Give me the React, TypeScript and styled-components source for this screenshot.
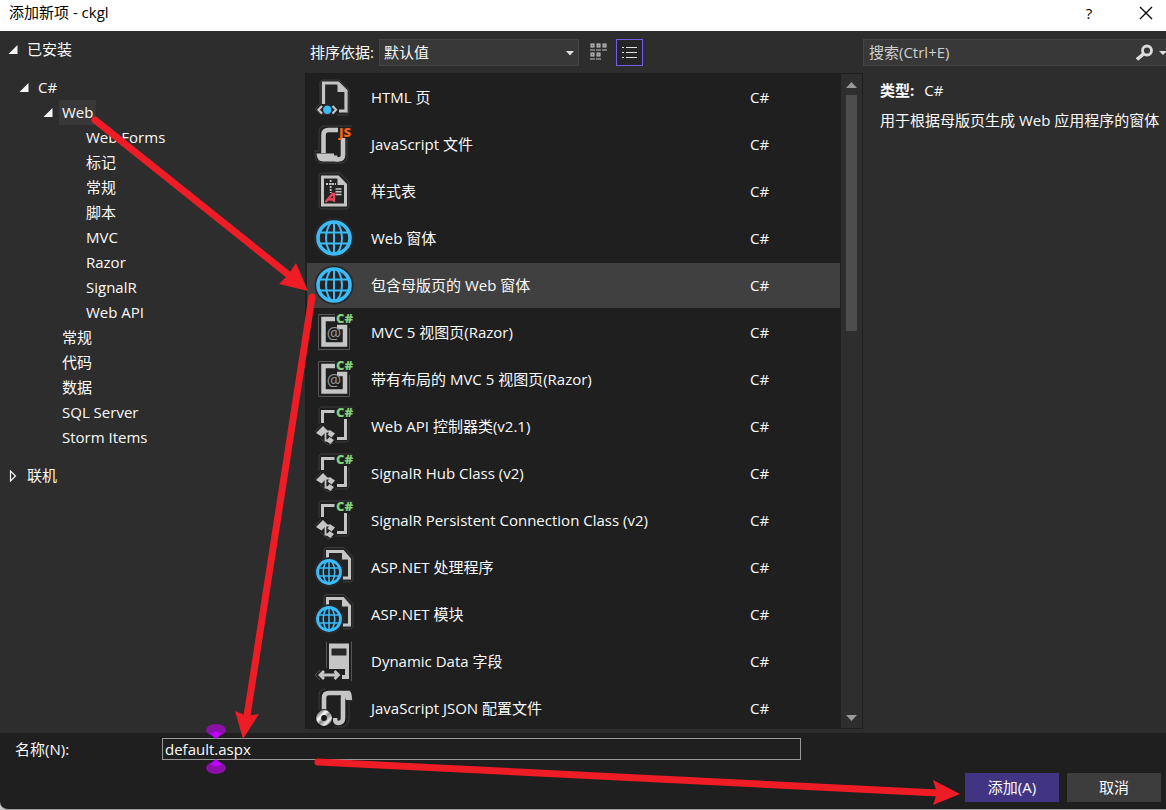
import React from "react";
import styled, { createGlobalStyle } from "styled-components";

const GlobalStyle = createGlobalStyle`
  * { box-sizing: border-box; }
  body { margin: 0; background: #c8c8c8; }
  body, button, input, select {
    font-family: "Open Sans", "Noto Sans CJK SC", sans-serif;
    font-size: 15px;
    line-height: 25px;
  }
`;

const Dialog = styled.div`
  position: relative;
  display: flex;
  flex-direction: column;
  height: 100vh;
  overflow: hidden;
  color: #fafafa;
  background: #1f1f1f;
  border-bottom: 1px solid #a0a0a0;
  border-bottom-left-radius: 8px;
`;

const TitleBar = styled.header`
  display: flex;
  align-items: center;
  flex: none;
  height: 31px;
  padding: 0 12px 6px 9px;
  background: #fff;
  color: #000;
`;

const Title = styled.h1`
  flex: 1;
  margin: 0;
  font-size: 15px;
  font-weight: 400;
`;

const TitleButton = styled.button`
  display: grid;
  place-items: center;
  width: 16px;
  height: 24px;
  margin-left: 41px;
  padding: 0;
  border: 0;
  background: none;
  color: #000;
`;

const Body = styled.main`
  display: grid;
  grid-template-columns: 305px minmax(0, 1fr) 303px;
  flex: 1;
  min-height: 0;
  background: #2d2d2d;
`;

const Sidebar = styled.nav`
  padding-top: 6px;
`;

const Group = styled.div<{ $gap?: number }>`
  margin-bottom: ${(p) => p.$gap ?? 0}px;
`;

const TreeRow = styled.div<{ $indent: number }>`
  display: flex;
  align-items: center;
  height: 25px;
  padding-left: ${(p) => p.$indent}px;
`;

const Toggle = styled.button`
  display: flex;
  width: 16px;
  padding: 0;
  border: 0;
  background: none;
`;

const TreeLabel = styled.a<{ $selected?: boolean }>`
  padding: 0 3px;
  color: inherit;
  text-decoration: none;
  background: ${(p) => (p.$selected ? "#383838" : "none")};
`;

const Center = styled.section`
  display: flex;
  flex-direction: column;
  min-height: 0;
  padding-bottom: 4px;
`;

const SortBar = styled.div`
  display: flex;
  align-items: center;
  flex: none;
  height: 42px;
  padding-left: 5px;
`;

const SortLabel = styled.label`
  width: 69px;
  white-space: nowrap;
`;

const SelectBox = styled.div`
  position: relative;
  width: 200px;
  margin-right: 10px;
`;

const SortSelect = styled.select`
  display: block;
  appearance: none;
  width: 100%;
  height: 27px;
  padding: 0 24px 0 4px;
  border: 1px solid #434343;
  background: #383838;
  color: #fafafa;
`;

const SelectArrow = styled.svg`
  position: absolute;
  right: 5px;
  top: 12px;
  pointer-events: none;
`;

const ViewButton = styled.button<{ $active?: boolean }>`
  display: grid;
  place-items: center;
  width: ${(p) => (p.$active ? 27 : 19)}px;
  height: 27px;
  margin-right: 8px;
  padding: 0;
  border: ${(p) => (p.$active ? "1px solid #7160e8" : "0")};
  background: ${(p) => (p.$active ? "#252525" : "none")};
`;

const ListFrame = styled.div`
  display: flex;
  flex: 1;
  min-height: 0;
  background: #1f1f1f;
`;

const List = styled.ul`
  display: flex;
  flex-direction: column;
  gap: 2px;
  flex: 1;
  margin: 0;
  padding: 2px 1px 0 2px;
  overflow: hidden;
  list-style: none;
`;

const ListRow = styled.li<{ $selected?: boolean }>`
  display: flex;
  align-items: center;
  flex: none;
  height: 45px;
  padding-left: 3px;
  background: ${(p) => (p.$selected ? "#404040" : "none")};
`;

const ItemName = styled.span`
  flex: 1;
  padding-left: 17px;
  white-space: nowrap;
`;

const ItemType = styled.span`
  width: 90px;
`;

const ScrollTrack = styled.div`
  display: flex;
  flex-direction: column;
  align-items: center;
  width: 21px;
  margin: 1px 1px 1px 0;
  padding: 8px 0 7px;
  background: #2e2e2e;
`;

const ScrollThumb = styled.div`
  width: 11px;
  height: 37%;
  margin: 7px 0 auto;
  background: #4d4d4d;
`;

const Details = styled.aside`
  min-width: 0;
`;

const SearchBox = styled.div`
  display: flex;
  align-items: center;
  height: 27px;
  margin-top: 8px;
  border: 1px solid #434343;
  border-right: 0;
  background: #383838;
`;

const SearchInput = styled.input`
  flex: 1;
  min-width: 0;
  padding: 0 5px;
  border: 0;
  outline: 0;
  background: none;
  color: #fafafa;
  &::placeholder { color: #cfcfcf; opacity: 1; }
`;

const DetailText = styled.p`
  margin: 0;
  padding: 12px 0 0 17px;
  white-space: nowrap;
  & + & { padding-top: 5px; }
  strong { margin-right: 10px; }
`;

const Footer = styled.footer`
  flex: none;
  padding: 5px 5px 7px 15px;
`;

const NameField = styled.div`
  display: flex;
  align-items: center;
  height: 22px;
  margin-bottom: 13px;
`;

const NameLabel = styled.label`
  width: 147px;
`;

const NameInput = styled.input`
  flex: 1;
  height: 22px;
  margin-right: 360px;
  padding: 0 2px;
  border: 1px solid #999;
  outline: 0;
  background: #1f1f1f;
  color: #fafafa;
`;

const Actions = styled.div`
  display: flex;
  justify-content: flex-end;
  gap: 8px;
`;

const ActionButton = styled.button<{ $primary?: boolean }>`
  width: 94px;
  height: 29px;
  padding: 0;
  border: 0;
  background: ${(p) => (p.$primary ? "#413583" : "#3d3d3d")};
  color: #fafafa;
`;

const Annotations = styled.svg`
  position: absolute;
  top: 0;
  left: 0;
  pointer-events: none;
`;

const Ic = styled.svg.attrs({ width: 44, height: 45, viewBox: "0 0 44 45", fill: "none" })`
  flex: none;
  display: block;
`;

const G = "#c5c5c5";
const BLUE = "#3cbbfa";
const HALO = "#454545";
const DARK = "#242424";

function Lang() {
  return <text x="26" y="13" fontSize="13" fontWeight="800" fontFamily="Open Sans" fill="#80d07d">C#</text>;
}

function Globe({ cx, cy, r, w }: { cx: number; cy: number; r: number; w: number }) {
  const k = r * 0.34;
  const h = Math.sqrt(r * r - k * k);
  return (
    <g>
      <circle cx={cx} cy={cy} r={r + w / 2 + 1.5} fill={DARK} stroke="#303030" strokeWidth="0.7" />
      <g stroke={BLUE}>
        <circle cx={cx} cy={cy} r={r} strokeWidth={w} />
        <path strokeWidth={w * 0.55} d={`M${cx - h} ${cy - k}H${cx + h}M${cx - h} ${cy + k}H${cx + h}M${cx} ${cy - r}V${cy + r}`} />
        <ellipse cx={cx} cy={cy} rx={r * 0.5} ry={r} strokeWidth={w * 0.55} />
      </g>
    </g>
  );
}

function HtmlIcon() {
  return (
    <Ic>
      <path d="M10 29V7l2-2h17l10 10v22l-2 3H27M10 29l-5 5 5 5h15" stroke={HALO} fill={DARK} strokeWidth="0.8" />
      <path d="M13.500 29V8H28l8 8v20h-7" stroke={G} strokeWidth="3.200" />
      <path d="M27.500 7l10 10h-10z" fill={G} />
      <path d="M12 31l-3.500 3.700L12 38.400M22.500 31l3.500 3.700-3.500 3.700" stroke={G} strokeWidth="2.200" />
      <circle cx="17.300" cy="34.700" r="4.200" fill={BLUE} />
    </Ic>
  );
}

function JsIcon() {
  return (
    <Ic>
      <path d="M9 29V10q0-5 5-6h28M4 29h5M5 31q0 9 6 10h21q5-1 5-6V17" stroke={HALO} strokeWidth="0.8" />
      <path d="M13.500 31V13q0-5 5-5H28M33 16v17q0 4.500-5 4.500-3 0-3-4" stroke={G} strokeWidth="4.600" />
      <path d="M6.500 31.500H24q0 6 4 8H13q-6 0-6.500-8z" fill={G} />
      <text x="29" y="15" fontSize="13" fontWeight="800" fontFamily="Open Sans" fill="#f26419">JS</text>
    </Ic>
  );
}

function CssIcon() {
  return (
    <Ic>
      <path d="M9 5l2-1h19l9 9v25l-2 2H11l-2-2z" stroke={HALO} fill={DARK} strokeWidth="0.8" />
      <path d="M12.500 8H28l7.500 7.500V36h-23z" stroke={G} strokeWidth="3" />
      <path d="M27.500 7l9 9h-9z" fill={G} />
      <path d="M16 15h10M20.700 11v13" stroke={G} strokeWidth="1.800" strokeDasharray="2 1" />
      <path d="M25.500 20h6M25.500 22.800h6M25.500 25.600h6" stroke={G} strokeWidth="1.500" />
      <path d="M15.500 33l7-8h1.500v8M18.500 30.500h5.500" stroke="#e84558" strokeWidth="2.400" />
    </Ic>
  );
}

function WebIcon() {
  return <Ic><Globe cx={24} cy={22} r={16} w={3.6} /></Ic>;
}

function RazorIcon() {
  return (
    <Ic>
      <path d="M25 4.500H8.500v35h31V18" stroke="#555" strokeWidth="1" />
      <path d="M25 9H13.500v25.500h21.500V17h-8" stroke={G} strokeWidth="4.500" />
      <text x="24" y="29" textAnchor="middle" fontSize="16" fontFamily="Open Sans" fill="#999">@</text>
      <Lang />
    </Ic>
  );
}

function ClassIcon() {
  return (
    <Ic>
      <path d="M9 20V5l2-2h30M39 16v20l-2 2H25M5 28l6-7M10 34l8 7 5-2M42 3v2" stroke={HALO} strokeWidth="0.800" />
      <path d="M12.500 19V7.500h12M35.500 15v19.500H27" stroke={G} strokeWidth="3" />
      <path d="M6 29l7-7 4.500 4.500-6 6z M20.500 26.500l4.500 3-3.500 4-4-3z M19.500 33l4.500 3-3.500 4-4.500-3z" fill={G} />
      <path d="M14 27.500h7M15.500 28v8.500h4" stroke={G} strokeWidth="1.800" />
      <Lang />
    </Ic>
  );
}

function AspIcon() {
  return (
    <Ic>
      <path d="M14 13V4l2-1.500h18l9 9v24l-2 1.500h-8" stroke={HALO} fill={DARK} strokeWidth="0.800" />
      <path d="M17.500 13V6.500H33l6.500 7.500v19H33" stroke={G} strokeWidth="3" />
      <path d="M32 5.500l9 9h-9z" fill={G} />
      <Globe cx={19} cy={27} r={11.5} w={2.8} />
    </Ic>
  );
}

function FieldIcon() {
  return (
    <Ic>
      <path d="M16.500 2.500V29M41.500 2.500V42M10 31l-5 5 5 5" stroke="#555" strokeWidth="1" />
      <path d="M19 4.500h20V40h-7v-4h3v-6H19z" fill={G} />
      <path d="M21.500 9.500h15v7h-15z" fill="#282828" />
      <path d="M11 36h16M14 32l-4 4 4 4M24.500 32l4 4-4 4" stroke={G} strokeWidth="2.800" />
    </Ic>
  );
}

function JsonIcon() {
  return (
    <Ic>
      <path d="M9 24V8q1-5 6-5M43 14h-4v20q-1 7-8 7h-7" stroke={HALO} strokeWidth="0.800" />
      <path d="M14 25V12q0-5 5-5h16q-2 2-2 6v19q0 5-5 5-3 0-3-5" stroke={G} strokeWidth="4.600" />
      <path d="M33 5h6q3 0 3 9h-6z" fill={G} />
      <circle cx="14" cy="32" r="9" fill="#181818" />
      <circle cx="14" cy="32" r="5.400" stroke="url(#ring)" strokeWidth="5" />
      <defs>
        <linearGradient id="ring" x1="0" y1="0" x2="1" y2="1">
          <stop offset="0" stopColor="#777" />
          <stop offset="0.300" stopColor="#fff" />
          <stop offset="0.550" stopColor="#8a8a8a" />
          <stop offset="0.850" stopColor="#eee" />
          <stop offset="1" stopColor="#888" />
        </linearGradient>
      </defs>
    </Ic>
  );
}

const items: { icon: React.FC; name: string }[] = [
  { icon: HtmlIcon, name: "HTML 页" },
  { icon: JsIcon, name: "JavaScript 文件" },
  { icon: CssIcon, name: "样式表" },
  { icon: WebIcon, name: "Web 窗体" },
  { icon: WebIcon, name: "包含母版页的 Web 窗体" },
  { icon: RazorIcon, name: "MVC 5 视图页(Razor)" },
  { icon: RazorIcon, name: "带有布局的 MVC 5 视图页(Razor)" },
  { icon: ClassIcon, name: "Web API 控制器类(v2.1)" },
  { icon: ClassIcon, name: "SignalR Hub Class (v2)" },
  { icon: ClassIcon, name: "SignalR Persistent Connection Class (v2)" },
  { icon: AspIcon, name: "ASP.NET 处理程序" },
  { icon: AspIcon, name: "ASP.NET 模块" },
  { icon: FieldIcon, name: "Dynamic Data 字段" },
  { icon: JsonIcon, name: "JavaScript JSON 配置文件" },
];

const webChildren = ["Web Forms", "标记", "常规", "脚本", "MVC", "Razor", "SignalR", "Web API"];
const langChildren = ["常规", "代码", "数据", "SQL Server", "Storm Items"];

function Node({ label, indent, open, selected }: { label: string; indent: number; open?: boolean; selected?: boolean }) {
  return (
    <TreeRow $indent={indent}>
      {open !== undefined && (
        <Toggle aria-label={label} aria-expanded={open}>
          <svg width="10" height="12" viewBox="0 0 10 12">
            {open ? <path d="M0.500 10H9.500V1z" fill="#f5f5f5" /> : <path d="M2.500 1v10L7.500 6z" fill="none" stroke="#f5f5f5" strokeWidth="1.200" />}
          </svg>
        </Toggle>
      )}
      <TreeLabel href="#" $selected={selected}>{label}</TreeLabel>
    </TreeRow>
  );
}

export default function App() {
  return (
    <Dialog>
      <GlobalStyle />
      <TitleBar>
        <Title>添加新项 - ckgl</Title>
        <TitleButton aria-label="帮助">?</TitleButton>
        <TitleButton aria-label="关闭">
          <svg width="14" height="14" viewBox="0 0 14 14"><path d="M1 1l12 12M13 1L1 13" stroke="#000" strokeWidth="1.300" /></svg>
        </TitleButton>
      </TitleBar>
      <Body>
        <Sidebar>
          <Group $gap={13}><Node label="已安装" indent={8} open /></Group>
          <Group $gap={13}>
            <Node label="C#" indent={19} open />
            <Node label="Web" indent={43} open selected />
            {webChildren.map((c) => <Node key={c} label={c} indent={83} />)}
            {langChildren.map((c) => <Node key={c} label={c} indent={59} />)}
          </Group>
          <Node label="联机" indent={8} open={false} />
        </Sidebar>
        <Center>
          <SortBar>
            <SortLabel htmlFor="sort">排序依据:</SortLabel>
            <SelectBox>
              <SortSelect id="sort"><option>默认值</option></SortSelect>
              <SelectArrow width="8" height="5" viewBox="0 0 8 5"><path d="M0 0h8L4 4.500z" fill="#e0e0e0" /></SelectArrow>
            </SelectBox>
            <ViewButton aria-label="图标">
              <svg width="18" height="19" viewBox="0 0 18 19" fill="none">
                {[[0, 1], [6, 1], [12, 1], [0, 10], [6, 10]].map(([x, y]) => (
                  <g key={`${x}-${y}`}>
                    <rect x={x + 1} y={y} width="3" height="3" fill="#777" stroke="#c5c5c5" strokeWidth="1" />
                    <path d={`M${x} ${y + 6}h5`} stroke="#999" strokeWidth="1.400" />
                  </g>
                ))}
              </svg>
            </ViewButton>
            <ViewButton $active aria-label="列表">
              <svg width="15" height="13" viewBox="0 0 15 13">
                <path d="M0 1.500h2M0 6.500h2M0 11.500h2M4 1.500h11M4 6.500h11M4 11.500h11" stroke="#e0e0e0" strokeWidth="1.200" />
              </svg>
            </ViewButton>
          </SortBar>
          <ListFrame>
            <List>
              {items.map(({ icon: Icon, name }, i) => (
                <ListRow key={name} $selected={i === 4}>
                  <Icon />
                  <ItemName>{name}</ItemName>
                  <ItemType>C#</ItemType>
                </ListRow>
              ))}
            </List>
            <ScrollTrack>
              <svg width="11" height="6" viewBox="0 0 11 6"><path d="M0 6h11L5.500 0z" fill="#999" /></svg>
              <ScrollThumb />
              <svg width="11" height="6" viewBox="0 0 11 6"><path d="M0 0h11L5.500 6z" fill="#999" /></svg>
            </ScrollTrack>
          </ListFrame>
        </Center>
        <Details>
          <SearchBox>
            <SearchInput aria-label="搜索" placeholder="搜索(Ctrl+E)" />
            <svg width="30" height="18" viewBox="0 0 30 18" fill="none">
              <circle cx="11" cy="6.500" r="4.500" stroke="#dcdcdc" strokeWidth="2.800" />
              <path d="M8 9.500l-7 6" stroke="#dcdcdc" strokeWidth="3.600" />
              <path d="M23 7h7v1l-3 3z" fill="#e0e0e0" />
            </svg>
          </SearchBox>
          <DetailText><strong>类型:</strong>C#</DetailText>
          <DetailText>用于根据母版页生成 Web 应用程序的窗体</DetailText>
        </Details>
      </Body>
      <Footer>
        <NameField>
          <NameLabel htmlFor="name">名称(N):</NameLabel>
          <NameInput id="name" defaultValue="default.aspx" />
        </NameField>
        <Actions>
          <ActionButton $primary>添加(A)</ActionButton>
          <ActionButton>取消</ActionButton>
        </Actions>
      </Footer>
      <Annotations width="1166" height="810" viewBox="0 0 1166 810" fill="none">
        <g fill="#8a10a8">
          <ellipse cx="216" cy="730" rx="10" ry="6" />
          <ellipse cx="216" cy="768" rx="10" ry="6" />
        </g>
        <path d="M210 734q6-5 12 0l-6 5zM210 764q6 5 12 0l-6-5z" fill="#c000ff" />
        <g stroke="#ee1c24" strokeWidth="7" strokeLinecap="round">
          <path d="M95 120L290 276M312 297L247 716M318 762L938 793" />
        </g>
        <path d="M308 291L279 284 288 275 296 263zM243 739L235 711 247 716 259 714zM960 794L933 780 937 793 933 805z" fill="#ee1c24" />
      </Annotations>
    </Dialog>
  );
}
